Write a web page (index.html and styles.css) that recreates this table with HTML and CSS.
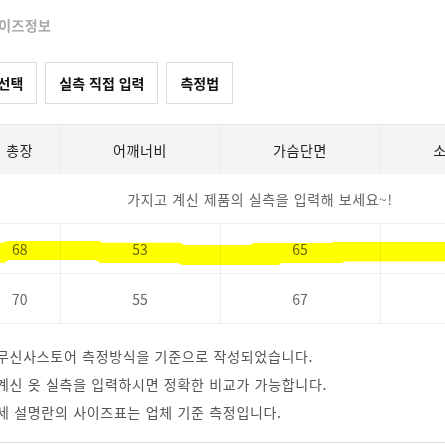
FILE: index.html
```html
<!DOCTYPE html>
<html lang="ko">
<head>
  <meta charset="UTF-8">
  <meta name="viewport" content="width=device-width, initial-scale=1.0">
  <title>사이즈정보</title>
  <link rel="stylesheet" href="styles.css">
</head>
<body>
  <div class="size-info">
    <h3 class="size-title">사이즈정보</h3>

    <div class="size-tabs">
      <button class="tab-btn">사이즈 선택</button>
      <button class="tab-btn">실측 직접 입력</button>
      <button class="tab-btn">측정법</button>
    </div>

    <div class="size-table">
      <table>
        <colgroup>
          <col class="col-s">
          <col class="col-m">
          <col class="col-m">
          <col class="col-m">
        </colgroup>
        <thead>
          <tr>
            <th>총장</th>
            <th>어깨너비</th>
            <th>가슴단면</th>
            <th>소매길이</th>
          </tr>
        </thead>
        <tbody>
          <tr class="msg-row">
            <td colspan="4">가지고 계신 제품의 실측을 입력해 보세요~!</td>
          </tr>
          <tr>
            <td>68</td>
            <td>53</td>
            <td>65</td>
            <td>64</td>
          </tr>
          <tr>
            <td>70</td>
            <td>55</td>
            <td>67</td>
            <td>65</td>
          </tr>
        </tbody>
      </table>
      <!-- 형광펜 표시 -->
      <svg class="highlight" width="480" height="26" viewBox="0 0 480 26">
        <polygon points="0,3 10,1 100,1 102,2.7 180,2.7 184,5 250,5 254,3 330,3 334,2 480,2 480,21.5 345,21.5 341,23 282,23 278,25 182,25 178,23 100,23 96,20 8,20 5,22.7 0,22.7" fill="#ffff00"/>
      </svg>
    </div>

    <ul class="size-notes">
      <li>무신사스토어 측정방식을 기준으로 작성되었습니다.</li>
      <li>계신 옷 실측을 입력하시면 정확한 비교가 가능합니다.</li>
      <li>세 설명란의 사이즈표는 업체 기준 측정입니다.</li>
    </ul>
  </div>
</body>
</html>
```

FILE: styles.css
```css
body {
  margin: 0;
  overflow: hidden;
  background: #fff;
  font-family: "Noto Sans CJK KR", "Noto Sans", sans-serif;
  font-size: 14px;
  color: #222;
}
.size-info {
  margin-left: -20px;
  width: 700px;
  padding-top: 15px;
  border-bottom: 1px solid #ddd;
  padding-bottom: 16px;
}
.size-title {
  margin: 0 0 0 5px;
  font-size: 14px;
  line-height: 20px;
  font-weight: 700;
  color: #aaa;
  letter-spacing: 0.4px;
}
.size-tabs {
  display: flex;
  gap: 8px;
  margin: 27px 0 0 -39px;
}
.tab-btn {
  font-family: inherit;
  font-size: 14px;
  font-weight: 700;
  line-height: 20px;
  color: #111;
  background: #fff;
  border: 1px solid #dcdcdc;
  padding: 10px 13px;
  cursor: pointer;
}
.size-table {
  position: relative;
  margin-top: 20px;
}
.size-table table {
  border-collapse: collapse;
  table-layout: fixed;
  width: 560px;
}
.col-s {
  width: 80px;
}
.col-m {
  width: 160px;
}
.size-table th {
  height: 49px;
  padding: 0;
  background: #f4f4f4;
  border-top: 1px solid #e6e6e6;
  border-left: 1px solid #eaeaea;
  font-weight: 400;
  color: #222;
  letter-spacing: 0.6px;
}
.size-table th:first-child,
.size-table td:first-child {
  border-left: none;
}
.size-table td {
  height: 49px;
  padding: 0;
  text-align: center;
  color: #666;
  border-bottom: 1px solid #eee;
  border-left: 1px solid #eee;
}
.msg-row td {
  color: #666;
  letter-spacing: 0.6px;
}
.highlight {
  position: absolute;
  left: 20px;
  top: 116px;
  mix-blend-mode: multiply;
  pointer-events: none;
}
.size-notes {
  list-style: none;
  margin: 18px 0 0 16px;
  padding: 0;
  color: #555;
  line-height: 28px;
  letter-spacing: 0.7px;
}
```
